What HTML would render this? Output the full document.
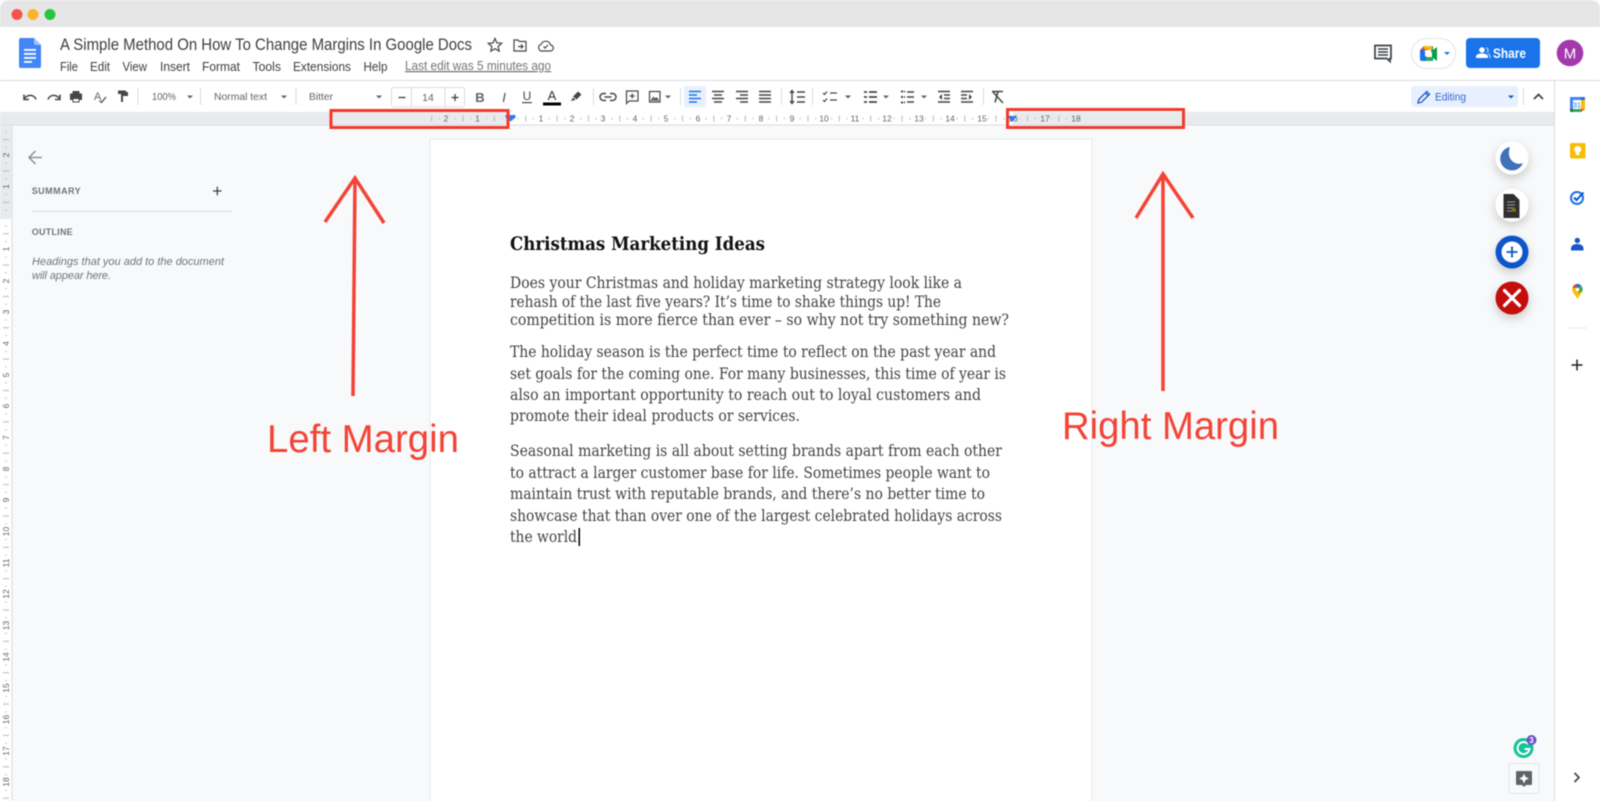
<!DOCTYPE html>
<html><head><meta charset="utf-8"><title>Google Docs</title>
<style>
html,body{margin:0;padding:0;background:#fff;overflow:hidden}
svg{display:block;filter:blur(.4px)}
text{font-family:"Liberation Sans",sans-serif}
.t{font-size:12.5px;fill:#3c4043}
.tb{font-size:10.5px;fill:#5f6368}
.b{font-family:"DejaVu Serif","Liberation Serif",serif;font-size:15.5px;fill:#444}
.r{font-size:8.5px;fill:#5f6368;text-anchor:middle}
.i{fill:none;stroke:#444746;stroke-width:1.5}
.f{fill:#444746}
.a{fill:#5f6368}
</style></head><body>
<svg width="1600" height="801" viewBox="0 0 1600 801" xmlns="http://www.w3.org/2000/svg">
<defs>
<pattern id="hr" x="510" y="112" width="31.36" height="13" patternUnits="userSpaceOnUse">
<rect x="15.2" y="3.5" width="1" height="6" fill="#b5b8bc"/><rect x="7.4" y="5.5" width="1" height="2" fill="#c5c7ca"/><rect x="23" y="5.5" width="1" height="2" fill="#c5c7ca"/>
</pattern>
<pattern id="vr" x="0" y="218" width="12" height="31.36" patternUnits="userSpaceOnUse">
<rect x="3" y="15.2" width="6" height="1" fill="#b5b8bc"/><rect x="5" y="7.4" width="2" height="1" fill="#c5c7ca"/><rect x="5" y="23" width="2" height="1" fill="#c5c7ca"/>
</pattern>
<filter id="sh" x="-50%" y="-50%" width="200%" height="200%"><feDropShadow dx="0" dy="4" stdDeviation="5" flood-color="#000" flood-opacity=".2"/></filter>
</defs>

<rect width="1600" height="801" fill="#fff"/>
<!-- window bar -->
<path d="M0 27V10Q0 0 10 0H1590Q1600 0 1600 10V27Z" fill="#e6e6e6"/>
<circle cx="17" cy="14.5" r="5.5" fill="#f5544d"/><circle cx="33" cy="14.5" r="5.5" fill="#fbb32f"/><circle cx="50" cy="14.5" r="5.5" fill="#28c63f"/>

<!-- docs icon -->
<path d="M21 38H34L41 45V66Q41 68 39 68H21Q19 68 19 66V40Q19 38 21 38Z" fill="#4285f4"/>
<path d="M34 38L41 45H36Q34 45 34 43Z" fill="#a1c2fa"/>
<rect x="24" y="49" width="12" height="1.8" fill="#fff"/><rect x="24" y="53" width="12" height="1.8" fill="#fff"/><rect x="24" y="57" width="12" height="1.8" fill="#fff"/><rect x="24" y="61" width="8" height="1.8" fill="#fff"/>

<!-- title -->
<text x="60" y="50" font-size="17" fill="#3c4043" textLength="412" lengthAdjust="spacingAndGlyphs">A Simple Method On How To Change Margins In Google Docs</text>
<path d="M495 38.5l1.9 4.4 4.8.4-3.6 3.2 1.1 4.7-4.2-2.5-4.2 2.5 1.1-4.7-3.6-3.2 4.8-.4z" class="i" style="stroke-width:1.2"/>
<path d="M514 40h4l1.5 1.5h6.5v9.5h-12zM518 46.5h5M521 44.5l2 2-2 2" class="i" style="stroke-width:1.2"/>
<path d="M543 51h7a3 3 0 0 0 .6-6 5 5 0 0 0-9.5-.7A3.4 3.4 0 0 0 543 51zM543.5 46.5l1.5 1.5 3-3" class="i" style="stroke-width:1.2"/>

<!-- menu -->
<text class="t" x="60" y="71" textLength="18" lengthAdjust="spacingAndGlyphs">File</text>
<text class="t" x="90" y="71" textLength="20" lengthAdjust="spacingAndGlyphs">Edit</text>
<text class="t" x="122.5" y="71" textLength="24.5" lengthAdjust="spacingAndGlyphs">View</text>
<text class="t" x="160" y="71" textLength="30" lengthAdjust="spacingAndGlyphs">Insert</text>
<text class="t" x="202" y="71" textLength="38" lengthAdjust="spacingAndGlyphs">Format</text>
<text class="t" x="252.5" y="71" textLength="28.5" lengthAdjust="spacingAndGlyphs">Tools</text>
<text class="t" x="293" y="71" textLength="58" lengthAdjust="spacingAndGlyphs">Extensions</text>
<text class="t" x="363.5" y="71" textLength="24" lengthAdjust="spacingAndGlyphs">Help</text>
<text class="t" x="405" y="70" textLength="146" lengthAdjust="spacingAndGlyphs" style="fill:#70757a" text-decoration="underline">Last edit was 5 minutes ago</text>

<!-- top right -->
<path d="M1375 45.5h16v13h-1v3l-3-3h-12z" fill="none" stroke="#3c4043" stroke-width="1.7"/>
<path d="M1378 49h10M1378 52h10M1378 55h10" stroke="#3c4043" stroke-width="1.4"/>
<rect x="1411.5" y="38.5" width="44" height="30" rx="15" fill="#fff" stroke="#e3e5e8"/>
<path d="M1420 50l4-4h8v6h-6v3h-6z" fill="#ea4335"/><path d="M1424 46h8v4h-4v-1h-4z" fill="#fbbc04"/><path d="M1420 50h6v5h-6z" fill="#1a73e8"/><path d="M1420 55h6v2h6v4h-10q-2 0-2-2z" fill="#1a73e8"/><path d="M1426 57h6v-2h0v6h-6z" fill="#34a853"/><path d="M1432 46q1 0 1 1v3l4-3v14l-4-3v3h-1v-6h0v-9z" fill="#00a04a"/><rect x="1425" y="50" width="6" height="6" fill="#fff"/>
<path d="M1444 52h6l-3 3z" fill="#1a73e8"/>
<rect x="1466" y="38" width="74" height="30" rx="4" fill="#1a73e8"/>
<circle cx="1482" cy="50" r="2.8" fill="#fff"/><path d="M1476 58v-1.500c0-2.200 3.500-3 6-3s6 .8 6 3v1.500z" fill="#fff"/><path d="M1486 47.800a2.600 2.600 0 0 1 .8 4.800M1488 53.800c1.300.400 2 1.100 2 2.700V58" fill="none" stroke="#cfe0fb" stroke-width="1"/>
<text x="1493" y="58" font-size="13.500" font-weight="700" fill="#fff" textLength="33" lengthAdjust="spacingAndGlyphs">Share</text>
<circle cx="1570" cy="53" r="13.300" fill="#a339ad"/>
<text x="1570" y="58.500" font-size="15" fill="#fff" text-anchor="middle">M</text>

<line x1="0" y1="80.500" x2="1600" y2="80.500" stroke="#dadce0" stroke-width="1"/>

<!-- main bg -->
<rect x="0" y="112" width="1554" height="689" fill="#f8f9fa"/>
<line x1="1554.500" y1="81" x2="1554.500" y2="801" stroke="#dadce0"/>

<!-- toolbar -->
<path d="M24 99.500c1.500-3.500 6-5 9-3.500 1.500.7 2.500 2 3 3.500M24 94.500v5h5" class="i"/>
<path d="M60 99.500c-1.500-3.500-6-5-9-3.500-1.500.7-2.500 2-3 3.500M60 94.500v5h-5" class="i"/>
<path d="M72.500 91h7v2.500h2.500v6.500h-2.500v-2h-7v2H70v-6.500h2.500z" class="f"/><rect x="73" y="98.500" width="6" height="3.500" fill="#fff" stroke="#444746"/>
<text x="94" y="100" font-size="11" fill="#5f6368">A</text><path d="M99.500 100.500l2 2 4.500-5.500" class="i" style="stroke-width:1.200"/>
<path d="M118 90.500h8v3.500h-8zM126 92h2v4h-5v6h-2v-8" fill="#444746"/>
<rect x="137.500" y="88" width="1" height="17" fill="#dadce0"/>
<text class="tb" x="152" y="100" textLength="24" lengthAdjust="spacingAndGlyphs">100%</text><path d="M187 95.500h6l-3 3z" class="a"/>
<rect x="200" y="88" width="1" height="17" fill="#dadce0"/>
<text class="tb" x="214" y="100" textLength="53" lengthAdjust="spacingAndGlyphs">Normal text</text><path d="M281 95.500h6l-3 3z" class="a"/>
<rect x="295.500" y="88" width="1" height="17" fill="#dadce0"/>
<text class="tb" x="309" y="100" textLength="24" lengthAdjust="spacingAndGlyphs">Bitter</text><path d="M376 95.500h6l-3 3z" class="a"/>
<rect x="391.500" y="87.500" width="73" height="19.500" rx="2" fill="#fff" stroke="#dadce0"/>
<path d="M411.500 88v19M445 88v19" stroke="#dadce0"/>
<path d="M398.500 97.500h7" stroke="#3c4043" stroke-width="1.300"/>
<text class="tb" x="428" y="101" text-anchor="middle">14</text>
<path d="M451.500 97.500h7M455 94v7" stroke="#3c4043" stroke-width="1.300"/>
<text x="480" y="102" font-size="13" font-weight="700" fill="#5f6368" text-anchor="middle">B</text>
<text x="504" y="102" font-size="13" font-style="italic" fill="#444746" text-anchor="middle">I</text>
<text x="527" y="100" font-size="12" fill="#444746" text-anchor="middle">U</text><rect x="522" y="102" width="10" height="1.200" fill="#444746"/>
<text x="552" y="100" font-size="13" fill="#333" text-anchor="middle">A</text><rect x="543" y="102.500" width="18" height="3" fill="#000"/>
<path d="M573 96.500l5-5 3.500 3-5 5zM571 101l2-3.500 2.500 2.500z" fill="#444746"/>
<rect x="593" y="88" width="1" height="17" fill="#dadce0"/>
<path d="M606 93.500h-2.500a3.500 3.500 0 0 0 0 7h2.500M610 93.500h2.500a3.500 3.500 0 0 1 0 7H610M604.500 97h7" fill="none" stroke="#444746" stroke-width="1.500"/>
<path d="M626.500 91h11.500v10h-9l-2.500 2.500zM632.200 93.500v5M629.700 96h5" class="i" style="stroke-width:1.200"/>
<path d="M649.500 91.500h10.500v10.500h-10.500zM651.500 100l2-2.500 1.500 1.500 1.500-1 1.500 2z" fill="none" stroke="#444746" stroke-width="1.200"/><path d="M665 95.500h6l-3 3z" class="a"/>
<rect x="680" y="88" width="1" height="17" fill="#dadce0"/>
<rect x="684" y="86" width="22" height="21.500" rx="2" fill="#e8f0fe"/>
<path d="M689 91.500h12M689 95h8M689 98.500h12M689 102h8" stroke="#1a73e8" stroke-width="1.400"/>
<path d="M712 91.500h12M714 95h8M712 98.500h12M714 102h8" stroke="#444746" stroke-width="1.400"/>
<path d="M736 91.500h12M740 95h8M736 98.500h12M740 102h8" stroke="#444746" stroke-width="1.400"/>
<path d="M759 91.500h12M759 95h12M759 98.500h12M759 102h12" stroke="#444746" stroke-width="1.400"/>
<rect x="781" y="88" width="1" height="17" fill="#dadce0"/>
<path d="M792 91v12M790 93l2-2.500 2 2.500M790 101l2 2.500 2-2.500M797 92h8M797 97h8M797 102h8" fill="none" stroke="#444746" stroke-width="1.400"/>
<rect x="812" y="88" width="1" height="17" fill="#dadce0"/>
<path d="M823 93l1.500 1.500 2.500-3M823 100l1.500 1.500 2.500-3M830 93h7M830 100h7" fill="none" stroke="#444746" stroke-width="1.200"/><path d="M845 95.500h6l-3 3z" class="a"/>
<path d="M864 92h3M864 97h3M864 102h3M869 92h8M869 97h8M869 102h8" stroke="#444746" stroke-width="1.800"/><path d="M883 95.500h6l-3 3z" class="a"/>
<path d="M901 91.500h4M901 97h4M901 102.500h4" stroke="#444746" stroke-width="2" stroke-dasharray="2 1"/><path d="M907 92h7M907 97h7M907 102h7" stroke="#444746" stroke-width="1.400"/><path d="M921 95.500h6l-3 3z" class="a"/>
<path d="M938 91.500h12M944 95h6M944 98.500h6M938 102h12" stroke="#444746" stroke-width="1.400"/><path d="M942 94v6l-3-3z" class="f"/>
<path d="M961 91.500h12M961 95h6M961 98.500h6M961 102h12" stroke="#444746" stroke-width="1.400"/><path d="M969 94v6l3-3z" class="f"/>
<rect x="983" y="88" width="1" height="17" fill="#dadce0"/>
<path d="M992 91.500h11M998 91.500l-3 11M993 92l10 11" fill="none" stroke="#444746" stroke-width="1.500"/>

<rect x="1411" y="86" width="107" height="21" rx="3" fill="#e8f0fe"/>
<path d="M1418 103l.8-3.500 8-8 2.700 2.700-8 8zM1425.500 93l2.700 2.700" fill="none" stroke="#1a56c4" stroke-width="1.300"/>
<text x="1435" y="100.500" font-size="11" fill="#3367d6" textLength="31" lengthAdjust="spacingAndGlyphs">Editing</text>
<path d="M1508 95.500h6l-3 3z" fill="#1a56c4"/>
<rect x="1523" y="88" width="1" height="17" fill="#dadce0"/>
<path d="M1534 99l4.500-4.500 4.500 4.500" fill="none" stroke="#3c4043" stroke-width="1.700"/>

<!-- ruler -->
<rect x="0" y="112" width="1554" height="13" fill="#e8eaed"/>
<rect x="510" y="112" width="503" height="13" fill="#fff"/>
<rect x="426" y="112" width="650" height="13" fill="url(#hr)"/>
<line x1="0" y1="125" x2="1554" y2="125" stroke="#dadce0"/>
<g>
<text class="r" x="446" y="121.500">2</text><text class="r" x="477.500" y="121.500">1</text>
<text class="r" x="541" y="121.500">1</text><text class="r" x="572" y="121.500">2</text><text class="r" x="603" y="121.500">3</text><text class="r" x="635" y="121.500">4</text><text class="r" x="666" y="121.500">5</text><text class="r" x="698" y="121.500">6</text><text class="r" x="729" y="121.500">7</text><text class="r" x="761" y="121.500">8</text><text class="r" x="792" y="121.500">9</text><text class="r" x="824" y="121.500">10</text><text class="r" x="855" y="121.500">11</text><text class="r" x="887" y="121.500">12</text><text class="r" x="919" y="121.500">13</text><text class="r" x="950" y="121.500">14</text><text class="r" x="982" y="121.500">15</text><text class="r" x="1013" y="121.500">16</text><text class="r" x="1045" y="121.500">17</text><text class="r" x="1076" y="121.500">18</text>
</g>
<path d="M505.500 115h10v2.500l-5 4-5-4z" fill="#3b78e7"/>
<path d="M1007 116h10l-5 6z" fill="#3b78e7"/>

<!-- vertical ruler -->
<rect x="0" y="125" width="12" height="94" fill="#e8eaed"/>
<rect x="0" y="219" width="12" height="582" fill="#fff"/>
<line x1="12" y1="125" x2="12" y2="801" stroke="#dadce0"/>
<rect x="0" y="125" width="12" height="676" fill="url(#vr)"/>
<g>
<text class="r" transform="translate(9 155) rotate(-90)">2</text><text class="r" transform="translate(9 186.500) rotate(-90)">1</text>
<text class="r" transform="translate(9 249) rotate(-90)">1</text><text class="r" transform="translate(9 281) rotate(-90)">2</text><text class="r" transform="translate(9 312) rotate(-90)">3</text><text class="r" transform="translate(9 343.500) rotate(-90)">4</text><text class="r" transform="translate(9 375) rotate(-90)">5</text><text class="r" transform="translate(9 406) rotate(-90)">6</text><text class="r" transform="translate(9 437.500) rotate(-90)">7</text><text class="r" transform="translate(9 469) rotate(-90)">8</text><text class="r" transform="translate(9 500) rotate(-90)">9</text><text class="r" transform="translate(9 531.500) rotate(-90)">10</text><text class="r" transform="translate(9 563) rotate(-90)">11</text><text class="r" transform="translate(9 594) rotate(-90)">12</text><text class="r" transform="translate(9 625.500) rotate(-90)">13</text><text class="r" transform="translate(9 657) rotate(-90)">14</text><text class="r" transform="translate(9 688) rotate(-90)">15</text><text class="r" transform="translate(9 719.500) rotate(-90)">16</text><text class="r" transform="translate(9 751) rotate(-90)">17</text><text class="r" transform="translate(9 782) rotate(-90)">18</text>
</g>

<!-- sidebar -->
<path d="M42 157.500H29.500M35.500 151l-6.500 6.500 6.500 6.500" fill="none" stroke="#80868b" stroke-width="1.300"/>
<text x="31.700" y="194" font-size="9" font-weight="700" fill="#70757a" textLength="49" lengthAdjust="spacing">SUMMARY</text>
<path d="M213 191h8.500M217.300 186.800v8.500" stroke="#3c4043" stroke-width="1.300"/>
<rect x="32" y="211" width="200" height="1" fill="#dadce0"/>
<text x="31.700" y="235" font-size="9" font-weight="700" fill="#70757a" textLength="41" lengthAdjust="spacing">OUTLINE</text>
<text x="32" y="265" font-size="11" font-style="italic" fill="#70757a" textLength="192" lengthAdjust="spacing">Headings that you add to the document</text>
<text x="32" y="279" font-size="11" font-style="italic" fill="#70757a" textLength="79" lengthAdjust="spacing">will appear here.</text>

<!-- page -->
<rect x="430" y="139" width="662" height="670" fill="#fff" stroke="#e6e8ea" stroke-width="1"/>
<text x="510" y="250" style="font-family:'DejaVu Serif','Liberation Serif',serif" font-size="18.500" font-weight="700" fill="#111" textLength="255" lengthAdjust="spacingAndGlyphs">Christmas Marketing Ideas</text>
<text class="b" x="510" y="288" textLength="452" lengthAdjust="spacingAndGlyphs">Does your Christmas and holiday marketing strategy look like a</text>
<text class="b" x="510" y="307" textLength="431" lengthAdjust="spacingAndGlyphs">rehash of the last five years? It’s time to shake things up! The</text>
<text class="b" x="510" y="325" textLength="499" lengthAdjust="spacingAndGlyphs">competition is more fierce than ever – so why not try something new?</text>
<text class="b" x="510" y="357" textLength="486" lengthAdjust="spacingAndGlyphs">The holiday season is the perfect time to reflect on the past year and</text>
<text class="b" x="510" y="379" textLength="496" lengthAdjust="spacingAndGlyphs">set goals for the coming one. For many businesses, this time of year is</text>
<text class="b" x="510" y="400" textLength="471" lengthAdjust="spacingAndGlyphs">also an important opportunity to reach out to loyal customers and</text>
<text class="b" x="510" y="421" textLength="290" lengthAdjust="spacingAndGlyphs">promote their ideal products or services.</text>
<text class="b" x="510" y="456" textLength="492" lengthAdjust="spacingAndGlyphs">Seasonal marketing is all about setting brands apart from each other</text>
<text class="b" x="510" y="478" textLength="480" lengthAdjust="spacingAndGlyphs">to attract a larger customer base for life. Sometimes people want to</text>
<text class="b" x="510" y="499" textLength="475" lengthAdjust="spacingAndGlyphs">maintain trust with reputable brands, and there’s no better time to</text>
<text class="b" x="510" y="521" textLength="492" lengthAdjust="spacingAndGlyphs">showcase that than over one of the largest celebrated holidays across</text>
<text class="b" x="510" y="542" textLength="67" lengthAdjust="spacingAndGlyphs">the world</text>
<rect x="578.500" y="528" width="1.500" height="18" fill="#000"/>

<!-- floating buttons -->
<circle cx="1512" cy="158" r="16.500" fill="#fff" filter="url(#sh)"/>
<path d="M1510 147A11.800 11.800 0 1 0 1523 163C1516 166 1505.500 160 1510 147Z" fill="#3f72b8"/>
<circle cx="1512" cy="205" r="16.500" fill="#fff" filter="url(#sh)"/>
<path d="M1503.500 194h10l6 6v18h-16z" fill="#2f2f2f"/><path d="M1507 202h8M1507 205h8M1507 208h7M1507 211h5" stroke="#9a9a9a" stroke-width="1"/><circle cx="1514" cy="210" r="2" fill="#8a6d10"/>
<circle cx="1512" cy="252" r="16.500" fill="#0b57c9" filter="url(#sh)"/>
<circle cx="1512" cy="252" r="10.500" fill="#fff"/>
<path d="M1506.500 252h11M1512 246.500v11" stroke="#0b57c9" stroke-width="1.800"/>
<circle cx="1512" cy="298" r="16.500" fill="#c40f0f" filter="url(#sh)"/>
<path d="M1504.500 290.500l15 15M1519.500 290.500l-15 15" stroke="#fff" stroke-width="3.300" stroke-linecap="round"/>

<!-- right panel icons -->
<rect x="1570" y="97" width="15" height="15" rx="1.500" fill="#fff"/>
<path d="M1570 97h11v3h-8v9h-3z" fill="#4285f4"/><path d="M1581 97h3q1 0 1 1v2h-4z" fill="#1a73e8"/><path d="M1581 100h4v9h-4z" fill="#fbbc04"/><path d="M1573 109h8v3h-8z" fill="#34a853"/><path d="M1570 109h3v3h-2q-1 0-1-1z" fill="#188038"/><path d="M1581 109h4l-4 3z" fill="#ea4335"/>
<text x="1577" y="107.500" font-size="7" fill="#1a73e8" text-anchor="middle">31</text>
<rect x="1570" y="143" width="15.500" height="15.500" rx="1.500" fill="#fbbc04"/>
<circle cx="1577.700" cy="149.500" r="3.500" fill="#fff"/><rect x="1575.800" y="153" width="3.800" height="2" fill="#fff"/>
<circle cx="1577" cy="198" r="6" fill="none" stroke="#1a73e8" stroke-width="2"/>
<path d="M1574 197.500l2.500 2.500 7-7.500" fill="none" stroke="#0b57d0" stroke-width="2"/>
<circle cx="1577.300" cy="240.500" r="2.700" fill="#1a56c4"/>
<path d="M1571 250.500v-2c0-3 3-4.500 6.300-4.500s6.200 1.500 6.200 4.500v2z" fill="#1a56c4"/>
<path d="M1577.500 284a5.300 5.300 0 0 1 5.300 5.300c0 3.500-3.500 6-5.300 9.700-1.800-3.700-5.300-6.200-5.300-9.700a5.300 5.300 0 0 1 5.300-5.300z" fill="#fbbc04"/>
<path d="M1572.500 288a5.300 5.300 0 0 1 3-3.700l3 3.500z" fill="#ea4335"/><path d="M1575.500 284.300a5.300 5.300 0 0 1 5.700 1.300l-3 3z" fill="#1a73e8"/><path d="M1581.500 286a5.300 5.300 0 0 1 .8 5l-3.500 2-1-3.500z" fill="#34a853"/><circle cx="1577.500" cy="289.500" r="1.800" fill="#fff"/>
<rect x="1569" y="327.500" width="17" height="1" fill="#e3e5e8"/>
<path d="M1571.500 365h11M1577 359.500v11" stroke="#202124" stroke-width="1.500"/>
<path d="M1574.500 773l4.500 4.500-4.500 4.500" fill="none" stroke="#3c4043" stroke-width="1.600"/>

<!-- grammarly -->
<circle cx="1523.500" cy="748" r="10" fill="#15c39a"/>
<path d="M1528 744a6 6 0 1 0 1.500 5h-5" fill="none" stroke="#fff" stroke-width="2"/>
<circle cx="1531.500" cy="740" r="5" fill="#6a4fc8"/><text x="1531.500" y="743" font-size="8" font-weight="700" fill="#fff" text-anchor="middle">3</text>
<rect x="1509" y="763.500" width="30" height="30" rx="2" fill="#f8f9fa" stroke="#e1e3e6"/>
<path d="M1517 771h14q1 0 1 1v12q0 1-1 1h-5l-2 2-2-2h-5q-1 0-1-1v-12q0-1 1-1z" fill="#5f6368"/>
<path d="M1524 773.500l1.500 3.500 3.500 1.500-3.500 1.500-1.500 3.500-1.500-3.500-3.500-1.500 3.500-1.500z" fill="#fff"/>

<!-- annotations -->
<rect x="331" y="110.500" width="177" height="17" fill="none" stroke="#f23a2c" stroke-width="3"/>
<rect x="1007.500" y="109.500" width="176" height="18" fill="none" stroke="#f23a2c" stroke-width="3"/>
<path d="M353 396L355 178M325 222L355 178L384 223" fill="none" stroke="#f44336" stroke-width="3.500"/>
<path d="M1163 391V174M1136 218L1163 174L1193 218" fill="none" stroke="#f44336" stroke-width="3.500"/>
<text x="267" y="452" font-size="39" fill="#f44336" textLength="192" lengthAdjust="spacingAndGlyphs">Left Margin</text>
<text x="1062" y="439" font-size="39" fill="#f44336" textLength="217" lengthAdjust="spacingAndGlyphs">Right Margin</text>
</svg>
</body></html>
